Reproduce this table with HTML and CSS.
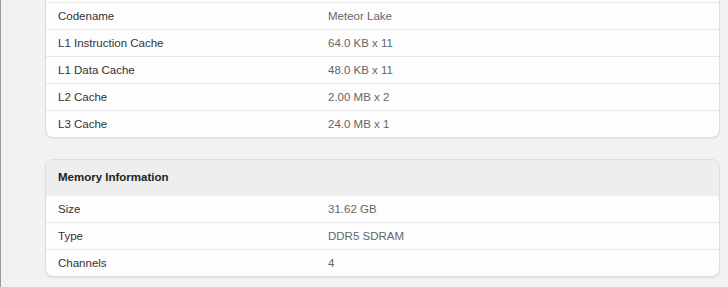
FILE: index.html
```html
<!DOCTYPE html>
<html>
<head>
<meta charset="utf-8">
<link rel="stylesheet" href="styles.css">
</head>
<body>
<main class="page">
  <section class="card card-cut">
    <div class="row"><span class="label">Codename</span><span class="value">Meteor Lake</span></div>
    <div class="row"><span class="label">L1 Instruction Cache</span><span class="value">64.0 KB x 11</span></div>
    <div class="row"><span class="label">L1 Data Cache</span><span class="value">48.0 KB x 11</span></div>
    <div class="row"><span class="label">L2 Cache</span><span class="value">2.00 MB x 2</span></div>
    <div class="row"><span class="label">L3 Cache</span><span class="value">24.0 MB x 1</span></div>
  </section>
  <section class="card">
    <div class="card-head">Memory Information</div>
    <div class="row row-first"><span class="label">Size</span><span class="value">31.62 GB</span></div>
    <div class="row"><span class="label">Type</span><span class="value">DDR5 SDRAM</span></div>
    <div class="row"><span class="label">Channels</span><span class="value">4</span></div>
  </section>
</main>
</body>
</html>
```
FILE: styles.css
```css
html, body {
  margin: 0;
  padding: 0;
  background: #f2f2f2;
  height: 100%;
  overflow: hidden;
}
body {
  border-left: 1px solid #9a9a9a;
  font-family: "Liberation Sans", Arial, sans-serif;
  font-size: 11.5px;
  color: #333;
}
.page {
  display: flex;
  flex-direction: column;
  gap: 21px;
  padding: 0 8px 0 44px;
}
.card {
  background: #fdfdfd;
  border: 1px solid #dedede;
  border-radius: 8px;
  box-shadow: 0 1px 2px rgba(0, 0, 0, 0.07);
  overflow: hidden;
}
.card-cut {
  margin-top: -11px;
  padding-top: 12px;
}
.card-head {
  background: #eeeeee;
  font-weight: bold;
  color: #222;
  padding: 9px 12px 11px;
  line-height: 16px;
}
.row {
  display: grid;
  grid-template-columns: 270px 1fr;
  padding: 5px 12px;
  line-height: 16px;
  border-top: 1px solid #e8e8e8;
}
.row-first {
  border-top: none;
}
.label {
  color: #333;
}
.value {
  color: #666;
}
```
